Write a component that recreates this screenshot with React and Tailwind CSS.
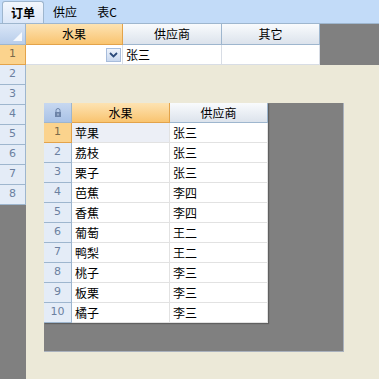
import React from 'react';

const rows = [
  ['苹果', '张三'],
  ['荔枝', '张三'],
  ['栗子', '张三'],
  ['芭蕉', '李四'],
  ['香蕉', '李四'],
  ['葡萄', '王二'],
  ['鸭梨', '王二'],
  ['桃子', '李三'],
  ['板栗', '李三'],
  ['橘子', '李三'],
];

const cjk = { fontFamily: '"Noto Sans CJK SC", "Liberation Sans", sans-serif' };
const num = { fontFamily: '"DejaVu Sans", "Liberation Sans", sans-serif' };

const headCell =
  'flex items-center justify-center border-r border-b border-[#9eb6ce] bg-gradient-to-b from-[#f9fbfd] to-[#dce3ec] text-[12px] text-black';
const orangeHead =
  'flex items-center justify-center border-r border-b border-[#e3a34a] bg-gradient-to-b from-[#fde3b2] to-[#f9c46f] text-[12px] text-black';
const rowHead =
  'flex items-center justify-center border-b border-r border-[#9eb6ce] bg-[#e4ecf7] text-[11px] text-[#6b80a0]';

const Corner = () => (
  <div className="relative h-[21px] w-[26px] border-r border-b border-[#9eb6ce] bg-gradient-to-b from-[#d9e6f7] to-[#b8cdea]">
    <svg className="absolute bottom-[3px] right-[3px]" width="9" height="9" viewBox="0 0 9 9">
      <polygon points="9,0 9,9 0,9" fill="#ffffff" opacity="0.85" />
    </svg>
  </div>
);

const Lock = () => (
  <svg width="8" height="9" viewBox="0 0 8 9">
    <path d="M2 4V2.5a2 2 0 0 1 4 0V4" fill="none" stroke="#6d84a8" strokeWidth="1" />
    <rect x="1" y="4" width="6" height="5" fill="#6d84a8" />
    <rect x="3.5" y="5.5" width="1" height="2" fill="#c9d7ec" />
  </svg>
);

export default function App() {
  return (
    <div className="flex h-[379px] w-[379px] flex-col overflow-hidden bg-[#ece9d8]" style={cjk}>
      {/* tabs */}
      <div className="flex h-[24px] items-end gap-0 border-b border-[#9eb6ce] bg-[#c2dbf8] pl-[2px] text-[12px]">
        <div className="flex h-[22px] w-[42px] items-center justify-center rounded-t-[3px] border border-b-0 border-[#9eb6ce] bg-gradient-to-b from-[#f3f7fd] to-[#dbe7f8] font-bold text-black">
          订单
        </div>
        <div className="flex h-[22px] w-[42px] items-center justify-center text-black">供应</div>
        <div className="flex h-[22px] w-[42px] items-center justify-center text-black">表C</div>
      </div>

      <div className="flex flex-1">
        {/* row headers */}
        <div className="flex w-[26px] flex-col bg-[#808080]">
          <Corner />
          <div className={rowHead + ' h-[20px] border-[#e3a34a] bg-[#fbd38d] text-[#7a6a4a]'} style={num}>1</div>
          {[2, 3, 4, 5, 6, 7, 8].map((n) => (
            <div key={n} className={rowHead + ' h-[20px]'} style={num}>
              {n}
            </div>
          ))}
        </div>

        <div className="flex flex-1 flex-col">
          <div className="flex">
            <div className="flex w-[294px] flex-col">
              <div className="flex h-[21px]">
                <div className={orangeHead + ' w-[97px]'}>水果</div>
                <div className={headCell + ' w-[99px]'}>供应商</div>
                <div className={headCell + ' w-[98px]'}>其它</div>
              </div>
              <div className="flex h-[20px] bg-white text-[12px]">
                <div className="flex w-[97px] items-center justify-end border-r border-b border-[#d8dde5] pr-[1px]">
                  <div className="flex h-[14px] w-[15px] items-center justify-center border border-[#a7bcdb] bg-gradient-to-b from-[#eef3fb] to-[#c9d8ef]">
                    <svg width="9" height="6" viewBox="0 0 9 6">
                      <path d="M1 1l3.5 3.5L8 1" fill="none" stroke="#2c4a7a" strokeWidth="1.8" />
                    </svg>
                  </div>
                </div>
                <div className="flex w-[99px] items-center border-r border-b border-[#d8dde5] pl-[3px]">张三</div>
                <div className="w-[98px] border-r border-b border-[#d8dde5]"></div>
              </div>
            </div>
            <div className="flex-1 bg-[#808080]"></div>
          </div>

          {/* nested grid */}
          <div className="flex-1 pl-[18px] pt-[38px]">
            <div className="h-[249px] w-[300px] border-r border-b border-[#a9b1bd] bg-[#808080]">
              <div className="flex w-[224px] flex-col text-[12px] shadow-[1px_1px_1px_rgba(0,0,0,0.25)]">
                <div className="flex h-[20px]">
                  <div className="flex w-[28px] items-center justify-center border-r border-b border-[#9eb6ce] bg-gradient-to-b from-[#c7d8f0] to-[#a9c2e6]">
                    <Lock />
                  </div>
                  <div className={orangeHead + ' w-[98px]'}>水果</div>
                  <div className={headCell + ' w-[98px]'}>供应商</div>
                </div>
                {rows.map(([a, b], i) => (
                  <div key={i} className="flex h-[20px] bg-white">
                    <div
                      className={
                        'flex w-[28px] items-center justify-center border-r border-b text-[11px] ' +
                        (i === 0
                          ? 'border-[#e3a34a] bg-[#fbd38d] text-[#7a6a4a]'
                          : 'border-[#9eb6ce] bg-[#e4ecf7] text-[#6b80a0]')
                      }
                      style={num}
                    >
                      {i + 1}
                    </div>
                    <div
                      className={
                        'flex w-[98px] items-center border-r border-b border-[#e2e2e2] pl-[3px] text-black ' +
                        (i === 0 ? 'bg-[#eceff6]' : '')
                      }
                    >
                      {a}
                    </div>
                    <div className="flex w-[98px] items-center border-r border-b border-[#e2e2e2] pl-[3px] text-black">
                      {b}
                    </div>
                  </div>
                ))}
              </div>
            </div>
          </div>
        </div>
      </div>
    </div>
  );
}
